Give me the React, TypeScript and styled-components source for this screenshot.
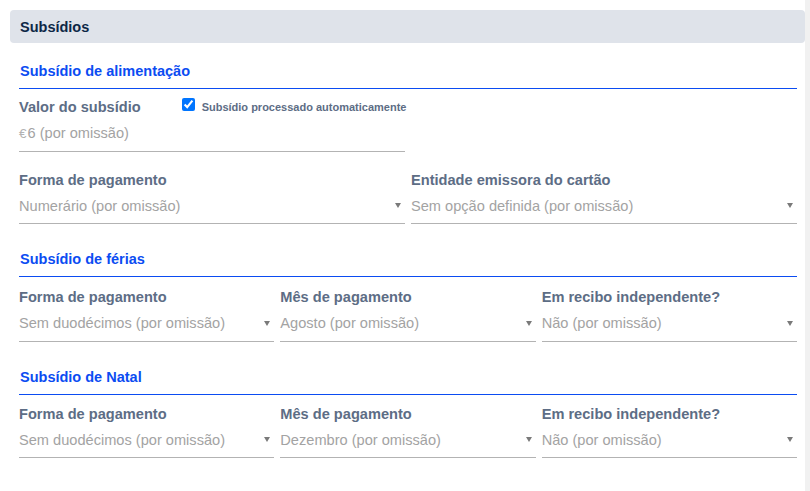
import * as React from 'react';
import styled, { createGlobalStyle } from 'styled-components';

const GlobalStyle = createGlobalStyle`
  html, body {
    margin: 0;
    padding: 0;
    background: #ffffff;
    font-family: "Liberation Sans", Arial, sans-serif;
  }
`;

const Page = styled.div`
  display: grid;
  grid-template-columns: 1fr 5px;
  width: 810px;
  min-height: 491px;
`;

const ScrollTrack = styled.div`
  background: #f1f1f1;
`;

const Main = styled.div`
  padding: 10px 0 0 10px;
`;

const Header = styled.div`
  height: 33px;
  display: flex;
  align-items: center;
  padding-left: 10px;
  background: #dfe3ea;
  border-radius: 4px;
  font-size: 14.5px;
  font-weight: bold;
  color: #0d2746;
`;

const Body = styled.div`
  padding: 0 8px 0 9px;
`;

const Section = styled.section<{ $first?: boolean }>`
  margin-top: ${(p) => (p.$first ? '18px' : '25px')};
`;

const SectionTitle = styled.h3`
  margin: 0;
  padding: 0 0 7px 1px;
  line-height: 20px;
  font-size: 14.5px;
  font-weight: bold;
  color: #0b4cf2;
  border-bottom: 1px solid #0b4cf2;
`;

const Rows = styled.div<{ $pad: number }>`
  display: flex;
  flex-direction: column;
  gap: 19px;
  padding-top: ${(p) => p.$pad}px;
`;

const Row = styled.div<{ $cols: number }>`
  display: grid;
  grid-template-columns: repeat(${(p) => p.$cols}, 1fr);
  column-gap: 6px;
`;

const Field = styled.div`
  display: flex;
  flex-direction: column;
  min-width: 0;
`;

const LabelLine = styled.div`
  display: flex;
  align-items: center;
  height: 18px;
  margin-bottom: 6px;
`;

const Label = styled.label`
  font-size: 14.6px;
  font-weight: bold;
  color: #5d6d85;
  white-space: nowrap;
`;

const CheckWrap = styled.label`
  display: flex;
  align-items: center;
  margin-left: 41px;
  font-size: 11px;
  font-weight: bold;
  color: #5d6d85;
  white-space: nowrap;
`;

const Check = styled.input`
  width: 13px;
  height: 13px;
  margin: -5px 7px 0 0;
  accent-color: #0075ff;
`;

const Input = styled.div`
  display: flex;
  align-items: center;
  justify-content: space-between;
  height: 22px;
  padding-bottom: 6.5px;
  border-bottom: 1px solid #b3b3b3;
  font-size: 14.6px;
  color: #a3a3a3;
  white-space: nowrap;
`;

const Euro = styled.span`
  font-size: 13.5px;
  margin-right: 1px;
  color: #b3b3b3;
`;

const Caret = styled.span`
  width: 0;
  height: 0;
  margin-right: 4px;
  border-left: 3.5px solid transparent;
  border-right: 3.5px solid transparent;
  border-top: 5px solid #7a7a7a;
`;

type SelectProps = { label: string; value: string };

const SelectField = ({ label, value }: SelectProps) => (
  <Field>
    <LabelLine>
      <Label>{label}</Label>
    </LabelLine>
    <Input>
      <span>{value}</span>
      <Caret />
    </Input>
  </Field>
);

export default function App() {
  return (
    <Page>
      <GlobalStyle />
      <Main>
        <Header>Subsídios</Header>
        <Body>
          <Section $first>
            <SectionTitle>Subsídio de alimentação</SectionTitle>
            <Rows $pad={9}>
              <Row $cols={2}>
                <Field>
                  <LabelLine>
                    <Label>Valor do subsídio</Label>
                    <CheckWrap>
                      <Check type="checkbox" defaultChecked />
                      Subsídio processado automaticamente
                    </CheckWrap>
                  </LabelLine>
                  <Input>
                    <span>
                      <Euro>€</Euro>6 (por omissão)
                    </span>
                  </Input>
                </Field>
              </Row>
              <Row $cols={2}>
                <SelectField label="Forma de pagamento" value="Numerário (por omissão)" />
                <SelectField label="Entidade emissora do cartão" value="Sem opção definida (por omissão)" />
              </Row>
            </Rows>
          </Section>

          <Section>
            <SectionTitle>Subsídio de férias</SectionTitle>
            <Rows $pad={11}>
              <Row $cols={3}>
                <SelectField label="Forma de pagamento" value="Sem duodécimos (por omissão)" />
                <SelectField label="Mês de pagamento" value="Agosto (por omissão)" />
                <SelectField label="Em recibo independente?" value="Não (por omissão)" />
              </Row>
            </Rows>
          </Section>

          <Section>
            <SectionTitle>Subsídio de Natal</SectionTitle>
            <Rows $pad={10}>
              <Row $cols={3}>
                <SelectField label="Forma de pagamento" value="Sem duodécimos (por omissão)" />
                <SelectField label="Mês de pagamento" value="Dezembro (por omissão)" />
                <SelectField label="Em recibo independente?" value="Não (por omissão)" />
              </Row>
            </Rows>
          </Section>
        </Body>
      </Main>
      <ScrollTrack />
    </Page>
  );
}
